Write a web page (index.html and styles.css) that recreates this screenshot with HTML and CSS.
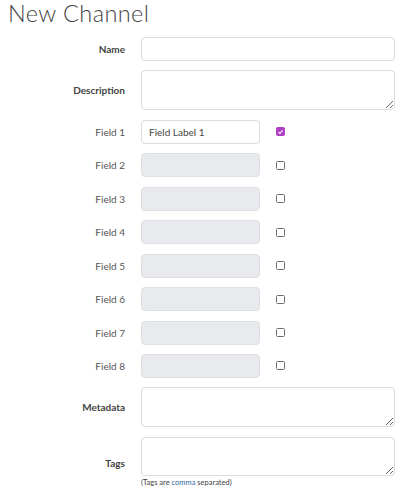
FILE: index.html
```html
<!DOCTYPE html>
<html>
<head>
<meta charset="utf-8">
<link rel="stylesheet" href="styles.css">
</head>
<body>
<h1 class="title">New Channel</h1>
<form class="form">
  <label class="lbl strong">Name</label>
  <div class="ctl"><input class="inp wide" type="text"></div>

  <label class="lbl strong">Description</label>
  <div class="ctl"><textarea class="inp wide area"></textarea></div>

  <label class="lbl">Field 1</label>
  <div class="ctl field"><input class="inp short" type="text" value="Field Label 1"><span class="chk on"><svg viewBox="0 0 10 10" width="8" height="8"><path d="M2 5.2 L4.1 7.2 L8 2.8" fill="none" stroke="#fff" stroke-width="1.6"/></svg></span></div>

  <label class="lbl">Field 2</label>
  <div class="ctl field"><input class="inp short off" type="text" disabled><span class="chk"></span></div>

  <label class="lbl">Field 3</label>
  <div class="ctl field"><input class="inp short off" type="text" disabled><span class="chk"></span></div>

  <label class="lbl">Field 4</label>
  <div class="ctl field"><input class="inp short off" type="text" disabled><span class="chk"></span></div>

  <label class="lbl">Field 5</label>
  <div class="ctl field"><input class="inp short off" type="text" disabled><span class="chk"></span></div>

  <label class="lbl">Field 6</label>
  <div class="ctl field"><input class="inp short off" type="text" disabled><span class="chk"></span></div>

  <label class="lbl">Field 7</label>
  <div class="ctl field"><input class="inp short off" type="text" disabled><span class="chk"></span></div>

  <label class="lbl">Field 8</label>
  <div class="ctl field"><input class="inp short off" type="text" disabled><span class="chk"></span></div>

  <label class="lbl strong">Metadata</label>
  <div class="ctl"><textarea class="inp wide area"></textarea></div>

  <label class="lbl strong tagslbl">Tags</label>
  <div class="ctl col">
    <textarea class="inp wide area tags"></textarea>
    <div class="help">(Tags are <span class="link">comma</span> separated)</div>
  </div>
</form>
</body>
</html>
```
FILE: styles.css
```css
html, body {
  margin: 0;
  padding: 0;
  background: #fff;
}
body {
  padding: 0 5px 0 8px;
  font-family: Lato, "Liberation Sans", sans-serif;
  color: #333;
  overflow: hidden;
}
.title {
  margin: 0;
  font-family: Lato, "Liberation Sans", sans-serif;
  font-weight: 300;
  font-size: 23.5px;
  line-height: 26px;
  letter-spacing: 0.4px;
  color: #444;
  height: 37px;
}
.form {
  display: grid;
  grid-template-columns: 117px 1fr;
  column-gap: 16px;
  row-gap: 9.45px;
  align-items: center;
}
.lbl {
  text-align: right;
  font-size: 10px;
  color: #555;
}
.lbl.strong {
  font-weight: 700;
  color: #444;
}
.ctl {
  display: flex;
  align-items: center;
}
.ctl.col {
  flex-direction: column;
  align-items: flex-start;
}
.tagslbl {
  align-self: start;
  margin-top: 20px;
}
.inp {
  box-sizing: border-box;
  height: 24px;
  border: 1px solid #dcdcdc;
  border-radius: 4px;
  background: #fff;
  font-family: Lato, "Liberation Sans", sans-serif;
  font-size: 10px;
  color: #444;
  padding: 0 7px;
  margin: 0;
  outline: none;
}
.wide {
  width: 254px;
}
.area {
  height: 40px;
  resize: vertical;
  display: block;
}
.tags {
  height: 39px;
}
.short {
  width: 119px;
}
.off {
  background: #e8eaed;
  border-color: #dcdfe3;
}
.field {
  gap: 16px;
}
.chk {
  box-sizing: border-box;
  width: 9px;
  height: 9px;
  border: 1px solid #6e6e6e;
  border-radius: 1.5px;
  background: #fff;
  display: flex;
  align-items: center;
  justify-content: center;
}
.chk.on {
  background: #b041c4;
  border-color: #b041c4;
}
.chk svg {
  display: block;
}
.help {
  font-size: 7.5px;
  color: #444;
  margin-top: 2px;
  line-height: 10px;
}
.link {
  color: #2b6aa6;
}
```
